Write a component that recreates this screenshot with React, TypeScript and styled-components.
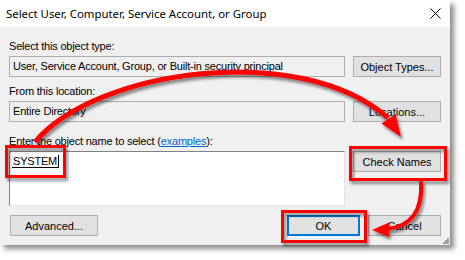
import React from "react";
import styled, { createGlobalStyle } from "styled-components";

const Global = createGlobalStyle`
  body {
    margin: 0;
    background: #ffffff;
  }
`;

const Stage = styled.div`
  position: relative;
  width: 465px;
  height: 260px;
  overflow: hidden;
`;

const Window = styled.div`
  position: relative;
  width: 450px;
  height: 245px;
  background: #f0f0f0;
  box-shadow: 4px 4px 5px rgba(0, 0, 0, 0.45);
  display: flex;
  flex-direction: column;
  font-family: "Liberation Sans", Arial, sans-serif;
  font-size: 11px;
  letter-spacing: -0.2px;
  color: #000;
`;

const TitleBar = styled.div`
  height: 27px;
  flex: none;
  background: #fff;
  display: flex;
  align-items: center;
  justify-content: space-between;
  padding: 0 9px 0 6px;
  font-family: "Noto Sans", "Open Sans", sans-serif;
  font-size: 11.4px;
  letter-spacing: 0;
  color: #000;
`;

const Content = styled.div`
  padding: 13px 9px 0 9px;
  display: flex;
  flex-direction: column;
`;

const Label = styled.div<{ top?: number }>`
  line-height: 13px;
  height: 13px;
  margin-top: ${(p) => p.top ?? 0}px;
  margin-bottom: 3px;
  white-space: nowrap;
`;

const Row = styled.div`
  display: flex;
  align-items: flex-start;
  gap: 8px;
`;

const Field = styled.div`
  box-sizing: border-box;
  width: 336px;
  height: 21px;
  border: 1px solid #adadad;
  background: #f0f0f0;
  padding: 0 3px;
  line-height: 19px;
  white-space: nowrap;
`;

const MultiField = styled.div`
  box-sizing: border-box;
  width: 336px;
  height: 55px;
  border: 1px solid;
  border-color: #828282 #e3e3e3 #e3e3e3 #828282;
  background: #fff;
  padding: 3px 2px;
`;

const Typed = styled.span`
  display: inline-block;
  line-height: 12px;
  padding: 0 1px;
  border-bottom: 1px solid #000;
  border-right: 1px solid #000;
`;

const Button = styled.div<{ w?: number; isDefault?: boolean }>`
  box-sizing: border-box;
  width: ${(p) => p.w ?? 88}px;
  height: 21px;
  background: #e1e1e1;
  border: ${(p) => (p.isDefault ? "2px solid #0078d7" : "1px solid #adadad")};
  display: flex;
  align-items: center;
  justify-content: center;
  white-space: nowrap;
  letter-spacing: 0;
`;

const Footer = styled.div`
  display: flex;
  align-items: center;
  margin-top: 9px;
  padding-left: 1px;
`;

const Spacer = styled.div`
  flex: 1;
`;

const FooterRight = styled.div`
  display: flex;
  gap: 8px;
`;

const Link = styled.span`
  color: #0066cc;
  text-decoration: underline;
`;

const Grip = styled.svg`
  position: absolute;
  right: 1px;
  bottom: 1px;
`;

const Annotations = styled.svg`
  position: absolute;
  left: 0;
  top: 0;
  pointer-events: none;
`;

const CloseIcon = () => (
  <svg width="11" height="11" viewBox="0 0 11 11">
    <path d="M0.5 0.5 L10.5 10.5 M10.5 0.5 L0.5 10.5" stroke="#000" strokeWidth="1" fill="none" />
  </svg>
);

const App = () => {
  return (
    <Stage>
      <Global />
      <Window>
        <TitleBar>
          <span>Select User, Computer, Service Account, or Group</span>
          <CloseIcon />
        </TitleBar>
        <Content>
          <Label>Select this object type:</Label>
          <Row>
            <Field>User, Service Account, Group, or Built-in security principal</Field>
            <Button>Object Types...</Button>
          </Row>
          <Label top={8}>From this location:</Label>
          <Row>
            <Field>Entire Directory</Field>
            <Button>Locations...</Button>
          </Row>
          <Label top={13}>
            Enter the object name to select (<Link>examples</Link>):
          </Label>
          <Row>
            <MultiField>
              <Typed>SYSTEM</Typed>
            </MultiField>
            <Button>Check Names</Button>
          </Row>
          <Footer>
            <Button>Advanced...</Button>
            <Spacer />
            <FooterRight>
              <Button w={73} isDefault>
                OK
              </Button>
              <Button w={73}>Cancel</Button>
            </FooterRight>
          </Footer>
        </Content>
        <Grip width="7" height="7" viewBox="0 0 7 7">
          <g fill="#a0a0a0">
            <rect x="5" y="1" width="2" height="2" />
            <rect x="3" y="3" width="2" height="2" />
            <rect x="5" y="3" width="2" height="2" />
            <rect x="1" y="5" width="2" height="2" />
            <rect x="3" y="5" width="2" height="2" />
            <rect x="5" y="5" width="2" height="2" />
          </g>
        </Grip>
      </Window>
      <Annotations width="465" height="260" viewBox="0 0 465 260">
        <defs>
          <filter id="shadow" x="-20%" y="-20%" width="140%" height="140%">
            <feDropShadow dx="2" dy="3" stdDeviation="1.6" floodColor="#000" floodOpacity="0.45" />
          </filter>
        </defs>
        <g filter="url(#shadow)">
          <rect x="6.5" y="146.5" width="58" height="30" fill="none" stroke="#ff0000" strokeWidth="3" />
          <rect x="350.5" y="147.5" width="95" height="32" fill="none" stroke="#ff0000" strokeWidth="3" />
          <rect x="282.5" y="211.5" width="83" height="30" fill="none" stroke="#ff0000" strokeWidth="3" />
          <path d="M35 142 C95 70, 300 40, 388 118" fill="none" stroke="#ff0000" strokeWidth="5" />
          <polygon points="401,137 381.5,123.5 395.5,114" fill="#ff0000" />
          <path d="M421 181 C423 212, 410 227, 386 229" fill="none" stroke="#ff0000" strokeWidth="4" />
          <polygon points="372,230 389,222.5 389,237" fill="#ff0000" />
        </g>
      </Annotations>
    </Stage>
  );
};

export default App;
